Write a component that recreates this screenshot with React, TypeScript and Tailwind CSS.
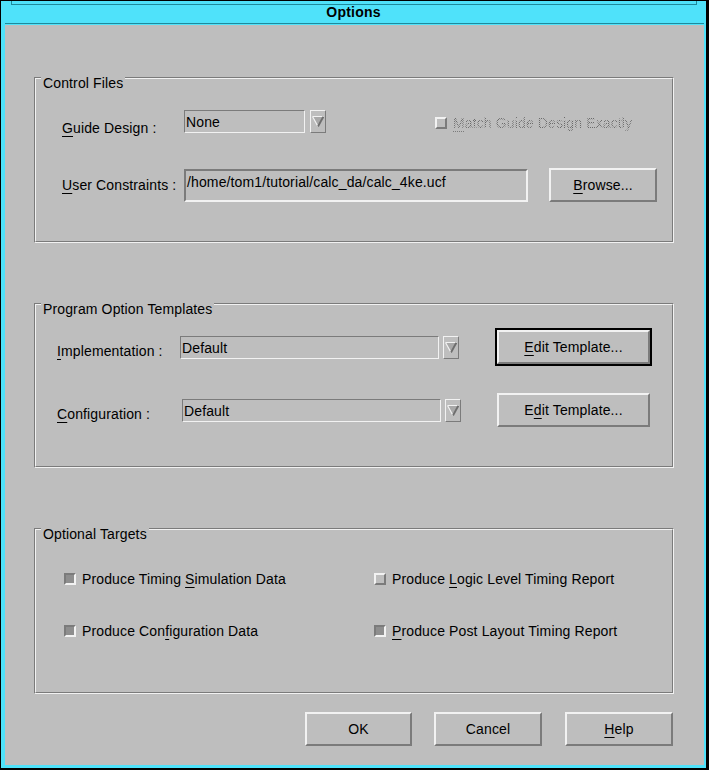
import type { ReactNode } from 'react';

const DARK = 'border-[#7b7b7b]';

// Mnemonic letter, as Motif underlines it.
function M({ children }: { children: ReactNode }) {
    return <span className="underline decoration-1 underline-offset-[3px]">{children}</span>;
}

function Frame({ title, height, children }: { title: string; height: number; children: ReactNode }) {
    return (
        <div
            className="relative w-[640px] border border-t-[#7b7b7b] border-l-[#7b7b7b] border-r-[#f2f2f2] border-b-[#f2f2f2]"
            style={{ height }}
        >
            <div className="h-full w-full border border-t-[#f2f2f2] border-l-[#f2f2f2] border-r-[#7b7b7b] border-b-[#7b7b7b]">
                {children}
            </div>
            <span className="absolute top-[-3px] left-[6px] bg-[#bebebe] px-[2px] leading-[16px]">{title}</span>
        </div>
    );
}

function Button({ children, width, height = 34 }: { children: ReactNode; width: number; height?: number }) {
    return (
        <div
            className="flex shrink-0 items-center justify-center border-2 border-t-[#f2f2f2] border-l-[#f2f2f2] border-r-[#7b7b7b] border-b-[#7b7b7b] bg-[#bebebe]"
            style={{ width, height }}
        >
            <span className="leading-[16px]">{children}</span>
        </div>
    );
}

function ComboField({ text, width }: { text: string; width: number }) {
    return (
        <div
            className={`flex h-[23px] shrink-0 items-center border ${DARK} border-r-[#f2f2f2] border-b-[#f2f2f2] pt-px pl-[1px] leading-[16px]`}
            style={{ width }}
        >
            {text}
        </div>
    );
}

function ArrowButton() {
    return (
        <div className="flex h-[23px] w-[16px] shrink-0 items-center justify-center border border-t-[#f2f2f2] border-l-[#f2f2f2] border-r-[#7b7b7b] border-b-[#7b7b7b]">
            <svg width="12" height="11" viewBox="0 0 12 11">
                <path d="M0.5 0.5 L6 10.5 L11.5 0.5 Z" fill="#a9a9a9" />
                <path d="M0.5 0.5 H11.5 M0.5 0.5 L6 10.5" stroke="#f2f2f2" strokeWidth="1.2" fill="none" />
                <path d="M11.3 0.8 L6 10.5" stroke="#6e6e6e" strokeWidth="1.8" fill="none" />
            </svg>
        </div>
    );
}

function Check({ checked }: { checked: boolean }) {
    return (
        <div
            className={
                checked
                    ? 'h-[12px] w-[12px] shrink-0 border-2 border-t-[#7b7b7b] border-l-[#7b7b7b] border-r-[#f2f2f2] border-b-[#f2f2f2] bg-[#8e8e8e]'
                    : 'h-[12px] w-[12px] shrink-0 border-2 border-t-[#f2f2f2] border-l-[#f2f2f2] border-r-[#7b7b7b] border-b-[#7b7b7b] bg-[#bebebe]'
            }
        />
    );
}

function Option({ checked, children }: { checked: boolean; children: ReactNode }) {
    return (
        <div className="flex h-[16px] items-center gap-[6px]">
            <Check checked={checked} />
            <span className="leading-[16px]">{children}</span>
        </div>
    );
}

export default function App() {
    return (
        <div className="flex h-[770px] w-[709px] flex-col border-t border-r-[3px] border-b-2 border-l border-black bg-[#4fe2fa] font-['Liberation_Sans',Arial,sans-serif] text-[14px] tracking-[0.13px] text-black">
            {/* title bar */}
            <div className="relative h-[24px] shrink-0">
                <div className="absolute top-[3px] right-[9px] left-[10px] h-px bg-[#1f8a9c]" />
                <div className="absolute top-0 left-[10px] h-[4px] w-px bg-[#1f8a9c]" />
                <div className="absolute top-0 right-[9px] h-[4px] w-px bg-[#1f8a9c]" />
                <div className="absolute right-[2px] bottom-px left-[4px] h-px bg-[#1f8a9c]" />
                <div className="flex h-full items-center justify-center pb-[2px] text-[14px] leading-none font-bold tracking-[0.2px]">
                    Options
                </div>
            </div>

            {/* dialog body */}
            <div className="mr-[2px] mb-[3px] ml-[4px] flex flex-1 flex-col bg-[#bebebe] pt-[52px] pl-[29px]">
                <Frame title="Control Files" height={166}>
                    <div className="flex flex-col gap-[35px] pt-[31px] pl-[26px]">
                        <div className="flex h-[23px] items-start">
                            <span className="mt-[10px] w-[122px] shrink-0 leading-[16px]">
                                <M>G</M>uide Design :
                            </span>
                            <ComboField text="None" width={121} />
                            <div className="ml-[5px]">
                                <ArrowButton />
                            </div>
                            <div className="mt-[5px] ml-[109px] flex items-center gap-[6px]">
                                <Check checked={false} />
                                <span className="bg-[image:repeating-conic-gradient(#6a6a6a_0%_25%,transparent_0%_50%)] bg-[length:2px_2px] bg-clip-text leading-[16px] text-transparent">
                                    <span className="underline decoration-[#7b7b7b] decoration-dotted decoration-1 underline-offset-[3px]">
                                        M
                                    </span>
                                    atch Guide Design Exactly
                                </span>
                            </div>
                        </div>
                        <div className="flex h-[34px] items-center">
                            <span className="w-[122px] shrink-0 leading-[16px]">
                                <M>U</M>ser Constraints :
                            </span>
                            <div className="h-[33px] w-[344px] shrink-0 border-2 border-t-[#7b7b7b] border-l-[#7b7b7b] border-r-[#f2f2f2] border-b-[#f2f2f2] pt-[3px] pl-[1px] leading-[16px]">
                                /home/tom1/tutorial/calc_da/calc_4ke.ucf
                            </div>
                            <div className="ml-[21px]">
                                <Button width={108}>
                                    <M>B</M>rowse...
                                </Button>
                            </div>
                        </div>
                    </div>
                </Frame>

                <div className="mt-[60px]">
                    <Frame title="Program Option Templates" height={165}>
                        <div className="flex flex-col gap-[27px] pt-[23px] pl-[21px]">
                            <div className="flex h-[38px] items-center">
                                <span className="mt-[8px] w-[123px] shrink-0 leading-[16px]">
                                    <M>I</M>mplementation :
                                </span>
                                <ComboField text="Default" width={259} />
                                <div className="ml-[4px]">
                                    <ArrowButton />
                                </div>
                                <div className="ml-[36px] border-2 border-black">
                                    <Button width={153}>
                                        <M>E</M>dit Template...
                                    </Button>
                                </div>
                            </div>
                            <div className="flex h-[34px] items-center">
                                <span className="mt-[8px] w-[125px] shrink-0 leading-[16px]">
                                    <M>C</M>onfiguration :
                                </span>
                                <ComboField text="Default" width={259} />
                                <div className="ml-[4px]">
                                    <ArrowButton />
                                </div>
                                <div className="ml-[36px]">
                                    <Button width={153}>
                                        E<M>d</M>it Template...
                                    </Button>
                                </div>
                            </div>
                        </div>
                    </Frame>
                </div>

                <div className="mt-[60px]">
                    <Frame title="Optional Targets" height={166}>
                        <div className="grid grid-cols-[310px_auto] gap-y-[36px] pt-[41px] pl-[28px]">
                            <Option checked>
                                Produce Timing <M>S</M>imulation Data
                            </Option>
                            <Option checked={false}>
                                Produce <M>L</M>ogic Level Timing Report
                            </Option>
                            <Option checked>
                                Produce Con<M>f</M>iguration Data
                            </Option>
                            <Option checked>
                                <M>P</M>roduce Post Layout Timing Report
                            </Option>
                        </div>
                    </Frame>
                </div>

                <div className="mt-[18px] ml-[271px] flex">
                    <Button width={107}>OK</Button>
                    <div className="ml-[22px]">
                        <Button width={108}>Cancel</Button>
                    </div>
                    <div className="ml-[23px]">
                        <Button width={108}>
                            <M>H</M>elp
                        </Button>
                    </div>
                </div>
            </div>
        </div>
    );
}
